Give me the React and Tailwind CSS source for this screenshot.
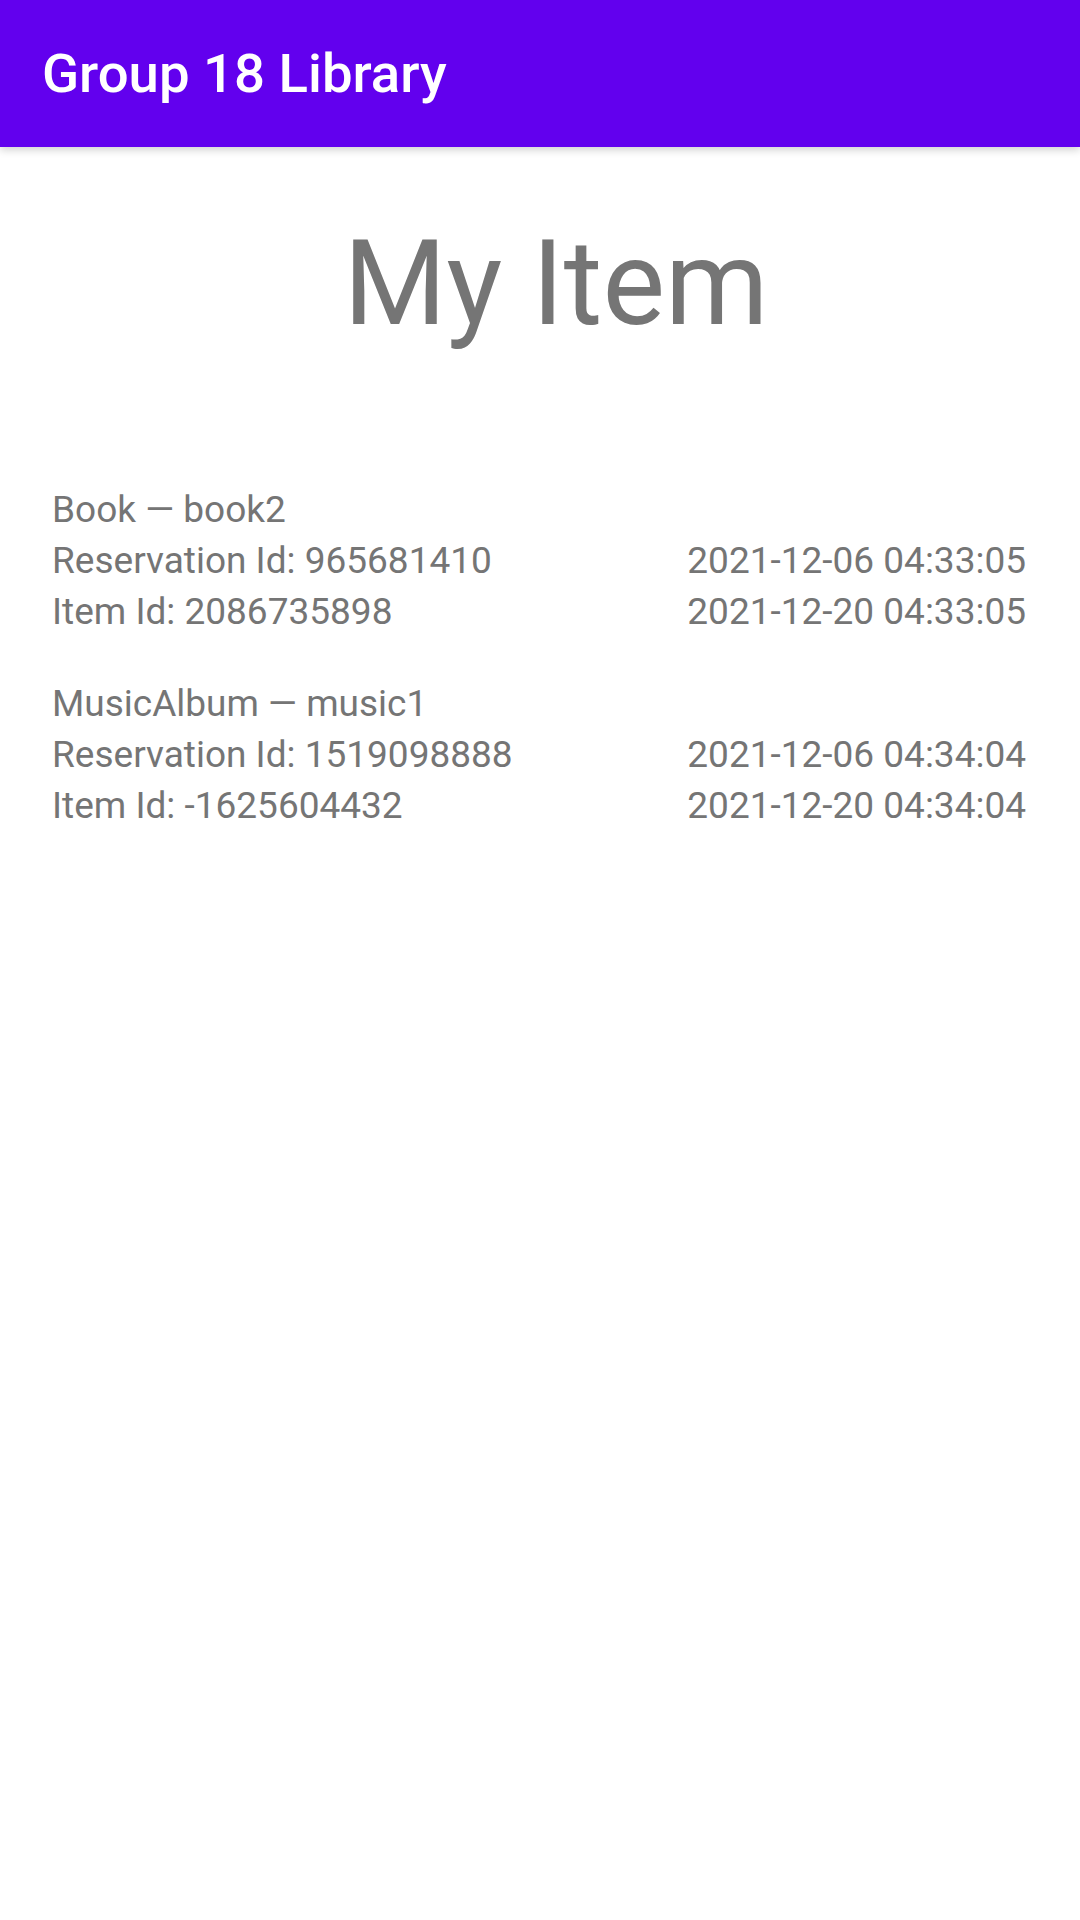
import React from 'react';

const reservations = [
  {
    type: 'Book',
    name: 'book2',
    reservationId: '965681410',
    itemId: '2086735898',
    start: '2021-12-06 04:33:05',
    end: '2021-12-20 04:33:05',
  },
  {
    type: 'MusicAlbum',
    name: 'music1',
    reservationId: '1519098888',
    itemId: '-1625604432',
    start: '2021-12-06 04:34:04',
    end: '2021-12-20 04:34:04',
  },
];

export default function App() {
  return (
    <div className="min-h-[1920px] w-[1080px] bg-white font-['Roboto',sans-serif] text-[#757575]">
      {/* toolbar */}
      <div className="relative z-10 flex h-[147px] items-center bg-[#6200EE] pl-[42px] shadow-[0_3px_8px_rgba(0,0,0,0.18)]">
        <h1 className="text-[54.5px] font-medium leading-none text-white">Group 18 Library</h1>
      </div>

      <h2 className="mt-[78px] pl-[32px] text-center text-[118px] leading-[118px] font-normal">My Item</h2>

      <div className="mt-[141px] flex flex-col gap-[41px] pl-[52px] pr-[54px] text-[37px] leading-[51px]">
        {reservations.map((r) => (
          <div key={r.reservationId} className="flex justify-between">
            <div className="flex flex-col">
              <span>{r.type} — {r.name}</span>
              <span>Reservation Id: {r.reservationId}</span>
              <span>Item Id: {r.itemId}</span>
            </div>
            <div className="flex flex-col">
              <span>&nbsp;</span>
              <span>{r.start}</span>
              <span>{r.end}</span>
            </div>
          </div>
        ))}
      </div>
    </div>
  );
}
